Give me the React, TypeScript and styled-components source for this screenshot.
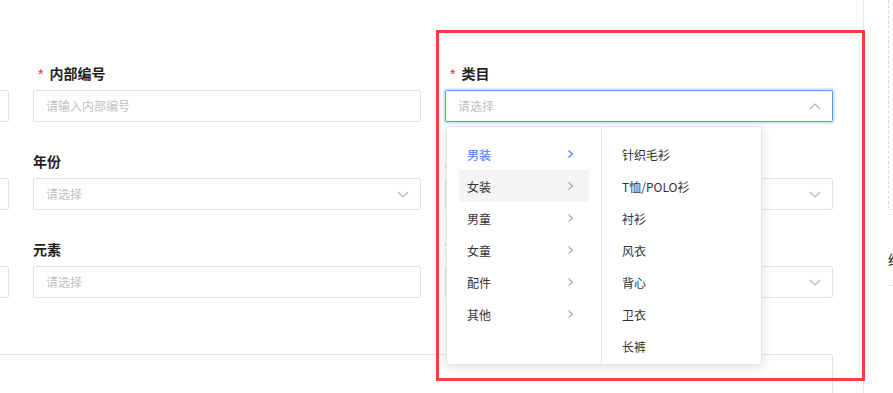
import React from 'react';
import styled, { createGlobalStyle } from 'styled-components';

const Global = createGlobalStyle`
  html, body { margin: 0; padding: 0; background: #fff; overflow: hidden; }
  body { font-family: "Noto Sans CJK SC", "Noto Sans", sans-serif; color: #333; }
  * { box-sizing: border-box; }
`;

const Page = styled.div`
  position: relative;
  display: flex;
  width: 1300px;
  height: 393px;
  overflow: hidden;
`;

const Main = styled.div`
  flex: none;
  width: 863px;
  height: 393px;
  overflow: hidden;
  display: flex;
  justify-content: flex-end;
  padding: 62px 30px 0 0;
`;

const FormGrid = styled.div`
  flex: none;
  display: grid;
  grid-template-columns: repeat(3, 388px);
  column-gap: 24px;
  row-gap: 28px;
  align-content: start;
`;

const Item = styled.div<{ $full?: boolean }>`
  position: relative;
  grid-column: ${(p) => (p.$full ? '1 / -1' : 'auto')};
`;

const Label = styled.div`
  height: 22px;
  line-height: 22px;
  margin-bottom: 6px;
  font-size: 14px;
  font-weight: 700;
  color: #1f1f1f;
  display: flex;
  align-items: center;
  white-space: nowrap;
`;

const Star = styled.span`
  color: #f5222d;
  font-family: "Liberation Sans", sans-serif;
  font-weight: 400;
  font-size: 14px;
  margin: 2px 6px 0 5px;
`;

const Box = styled.div<{ $focus?: boolean; $tall?: boolean }>`
  position: relative;
  height: ${(p) => (p.$tall ? '100px' : '32px')};
  border: 1px solid ${(p) => (p.$focus ? '#4d9cf8' : '#e2e2e2')};
  box-shadow: ${(p) => (p.$focus ? '0 0 0 2px rgba(77,156,248,0.22)' : 'none')};
  border-radius: 2px;
  background: #fff;
  display: flex;
  align-items: ${(p) => (p.$tall ? 'flex-start' : 'center')};
  justify-content: space-between;
  padding: 0 11px 0 12px;
`;

const Placeholder = styled.span`
  font-size: 12px;
  line-height: 30px;
  color: #c0c0c0;
  white-space: nowrap;
`;

const Dropdown = styled.div`
  position: absolute;
  top: calc(100% + 4px);
  left: 1px;
  width: 316px;
  height: 239px;
  background: #fff;
  border: 1px solid #e6e6e6;
  border-radius: 2px;
  box-shadow: 0 3px 12px rgba(0, 0, 0, 0.12);
  display: flex;
  overflow: hidden;
  z-index: 10;
`;

const Menu = styled.div<{ $first?: boolean }>`
  flex: ${(p) => (p.$first ? 'none' : '1')};
  width: ${(p) => (p.$first ? '155px' : 'auto')};
  border-right: ${(p) => (p.$first ? '1px solid #e6e6e6' : 'none')};
  padding: 11px 12px 12px;
  display: flex;
  flex-direction: column;
`;

const MenuItem = styled.div<{ $active?: boolean; $hover?: boolean }>`
  flex: none;
  height: 32px;
  display: flex;
  align-items: center;
  justify-content: space-between;
  padding: 0 15px 0 8px;
  font-size: 12px;
  color: ${(p) => (p.$active ? '#3b7bff' : '#333')};
  background: ${(p) => (p.$hover ? '#f4f4f4' : 'transparent')};
  border-radius: 2px;
  white-space: nowrap;
`;

const Sidebar = styled.div`
  flex: none;
  width: 400px;
  height: 393px;
  border-left: 1px solid #e8e8e8;
  padding-left: 24px;
`;

const DashedBox = styled.div`
  margin-top: -20px;
  height: 230px;
  border: 1px dashed #dadada;
  border-radius: 4px;
`;

const SideTitle = styled.div`
  margin-top: 38px;
  height: 22px;
  line-height: 22px;
  font-size: 14px;
  color: #333;
`;

const Divider = styled.div`
  margin-top: 15px;
  border-top: 1px solid #e8e8e8;
`;

const Annotation = styled.div`
  position: absolute;
  left: 436px;
  top: 30px;
  width: 429px;
  height: 351px;
  border: 3px solid #ff3b3b;
  pointer-events: none;
  z-index: 20;
`;

const Chevron = ({ up }: { up?: boolean }) => (
  <svg width="12" height="7" viewBox="0 0 12 7" style={{ flex: 'none' }}>
    <polyline
      points={up ? '1,6 6,1 11,6' : '1,1 6,6 11,1'}
      fill="none"
      stroke="#b3b3b3"
      strokeWidth="1.2"
    />
  </svg>
);

const Arrow = ({ color }: { color: string }) => (
  <svg width="7" height="10" viewBox="0 0 7 10" style={{ flex: 'none' }}>
    <polyline points="1.5,1.5 5.5,5 1.5,8.5" fill="none" stroke={color} strokeWidth="1.1" />
  </svg>
);

const left = ['男装', '女装', '男童', '女童', '配件', '其他'];
const right = ['针织毛衫', 'T恤/POLO衫', '衬衫', '风衣', '背心', '卫衣', '长裤'];

export default function App() {
  return (
    <>
      <Global />
      <Page>
        <Main>
          <FormGrid>
            <Item>
              <Label><Star>*</Star>款号</Label>
              <Box><Placeholder>请输入款号</Placeholder></Box>
            </Item>
            <Item>
              <Label><Star>*</Star>内部编号</Label>
              <Box><Placeholder>请输入内部编号</Placeholder></Box>
            </Item>
            <Item>
              <Label><Star>*</Star>类目</Label>
              <Box $focus>
                <Placeholder>请选择</Placeholder>
                <Chevron up />
              </Box>
              <Dropdown>
                <Menu $first>
                  {left.map((t, i) => (
                    <MenuItem key={t} $active={i === 0} $hover={i === 1}>
                      <span>{t}</span>
                      <Arrow color={i === 0 ? '#3b7bff' : '#a6a6a6'} />
                    </MenuItem>
                  ))}
                </Menu>
                <Menu>
                  {right.map((t) => (
                    <MenuItem key={t}>{t}</MenuItem>
                  ))}
                </Menu>
              </Dropdown>
            </Item>

            <Item>
              <Label>季节</Label>
              <Box><Placeholder>请选择</Placeholder><Chevron /></Box>
            </Item>
            <Item>
              <Label>年份</Label>
              <Box><Placeholder>请选择</Placeholder><Chevron /></Box>
            </Item>
            <Item>
              <Label>品牌</Label>
              <Box><Placeholder>请选择</Placeholder><Chevron /></Box>
            </Item>

            <Item>
              <Label>风格</Label>
              <Box><Placeholder>请选择</Placeholder><Chevron /></Box>
            </Item>
            <Item>
              <Label>元素</Label>
              <Box><Placeholder>请选择</Placeholder></Box>
            </Item>
            <Item>
              <Label>面料</Label>
              <Box><Placeholder>请选择</Placeholder><Chevron /></Box>
            </Item>

            <Item $full>
              <Label>备注</Label>
              <Box $tall />
            </Item>
          </FormGrid>
        </Main>
        <Sidebar>
          <DashedBox />
          <SideTitle>结构图</SideTitle>
          <Divider />
        </Sidebar>
        <Annotation />
      </Page>
    </>
  );
}
